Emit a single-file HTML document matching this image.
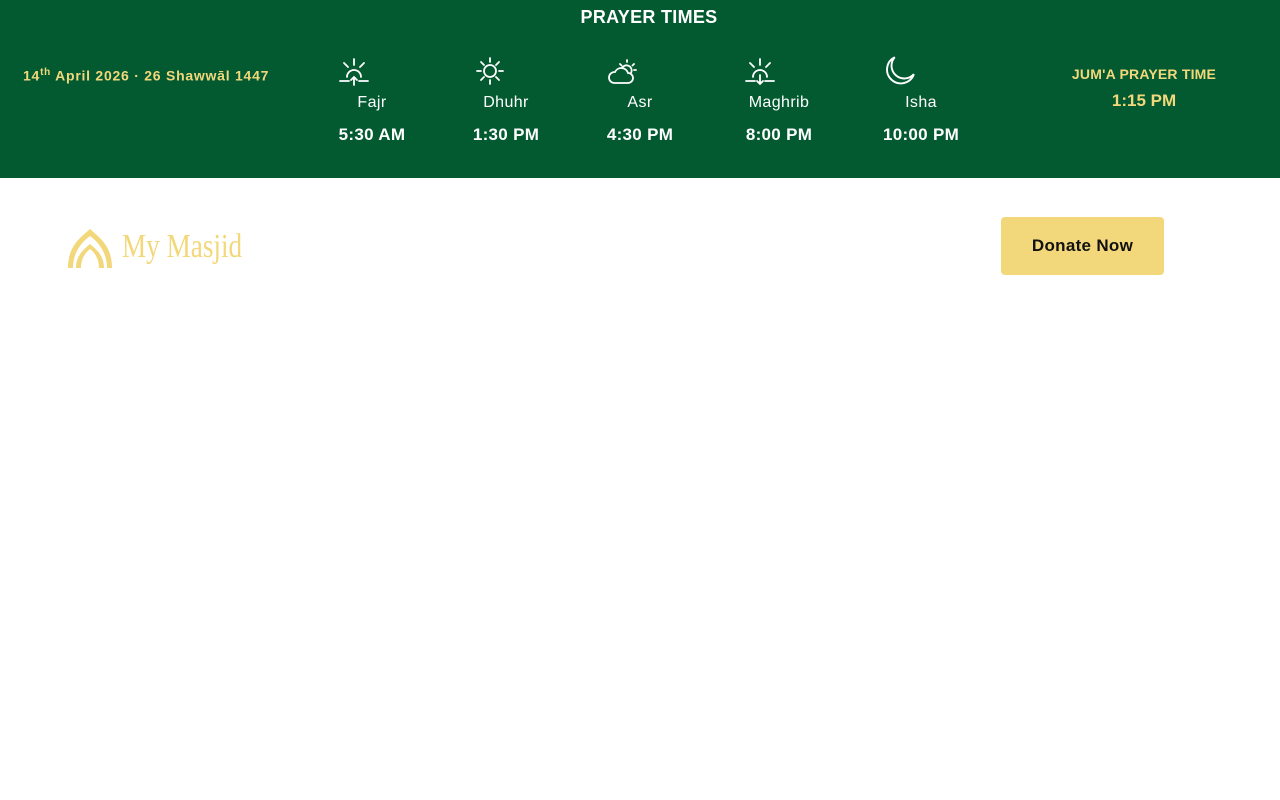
<!DOCTYPE html>
<html><head><meta charset="utf-8"><style>
body{margin:0;width:1280px;height:800px;background:#fff;font-family:"Liberation Sans",sans-serif;position:relative;overflow:hidden}
.bar{position:absolute;left:0;top:0;width:1280px;height:178px;background:#035a30;color:#fff}
.a{position:absolute;white-space:nowrap}
.c{transform:translateX(-50%)}
.lbl{font-size:16px;top:94px;letter-spacing:0.4px}
.t{font-size:17px;font-weight:bold;top:125px;letter-spacing:0.3px}
svg.i{position:absolute;top:57px;width:32px;height:30px;fill:none;stroke:#fff;stroke-width:1.8;stroke-linecap:round}
.y{color:#f2d87b}
</style></head><body>
<div class="bar">
<div class="a c" style="left:649px;top:7px;font-size:18px;font-weight:bold;letter-spacing:0.3px">PRAYER TIMES</div>
<div class="a y" style="left:23px;top:67px;font-size:14px;font-weight:bold;letter-spacing:0.75px">14<sup style="font-size:10px">th</sup> April 2026 · 26 Shawwāl 1447</div>

<svg class="i" style="left:338px" viewBox="0 0 32 30"><path d="M16 2v6M6 6l4 4M26 6l-4 4M9 20a7 7 0 0 1 14 0M2 24h9M21 24h9M16 28v-8M13 23l3-3 3 3"/></svg>
<svg class="i" style="left:474px" viewBox="0 0 32 30"><circle cx="16" cy="14" r="6"/><path d="M16 1v4M16 23v4M3 14h4M25 14h4M7 5l3 3M25 5l-3 3M7 23l3-3M25 23l-3-3"/></svg>
<svg class="i" style="left:606px" viewBox="0 0 32 30"><path d="M8 26h14a5 5 0 0 0 0-10 7 7 0 0 0-13-1 5.5 5.5 0 0 0-1 11zM16 11a5 5 0 0 1 9 5M21 3v2M28 7l-1.5 1.5M14 7l1.5 1.5M30 13h-2"/></svg>
<svg class="i" style="left:744px" viewBox="0 0 32 30"><path d="M16 2v6M6 6l4 4M26 6l-4 4M9 20a7 7 0 0 1 14 0M2 24h9M21 24h9M16 18v9M13 24l3 3 3-3"/></svg>
<svg class="i" style="left:882px;width:34px;height:32px;top:55px" viewBox="0 0 32 30"><path d="M12 2a13 13 0 1 0 18 16 10 10 0 0 1-18-16z"/></svg>

<div class="a c lbl" style="left:372px">Fajr</div>
<div class="a c lbl" style="left:506px">Dhuhr</div>
<div class="a c lbl" style="left:640px">Asr</div>
<div class="a c lbl" style="left:779px">Maghrib</div>
<div class="a c lbl" style="left:921px">Isha</div>
<div class="a c t" style="left:372px">5:30 AM</div>
<div class="a c t" style="left:506px">1:30 PM</div>
<div class="a c t" style="left:640px">4:30 PM</div>
<div class="a c t" style="left:779px">8:00 PM</div>
<div class="a c t" style="left:921px">10:00 PM</div>
<div class="a c y" style="left:1144px;top:66px;font-size:14px;font-weight:bold;letter-spacing:0.2px">JUM'A PRAYER TIME</div>
<div class="a c y" style="left:1144px;top:91px;font-size:17px;font-weight:bold">1:15 PM</div>
</div>

<svg style="position:absolute;left:66px;top:228px" width="50" height="42" viewBox="0 0 50 42"><path fill="#f2d87b" d="M24 1C14 10 2 18 2 40h5C7 24 16 14 24 8c8 6 17 16 17 32h5C46 18 34 10 24 1z"/><path fill="#f2d87b" d="M24 16C17 22 10 28 10 40h5c0-9 4-15 9-19 5 4 9 10 9 19h5c0-12-7-18-14-24z"/></svg>
<div class="a" style="left:122px;top:228px;font-family:'Liberation Serif',serif;font-size:34px;color:#f2d87b;transform:scaleX(0.8);transform-origin:0 0">My Masjid</div>

<div class="a" style="left:1001px;top:217px;width:163px;height:58px;background:#f2d87b;border-radius:4px;font-size:17px;font-weight:bold;color:#111;text-align:center;line-height:57px;letter-spacing:0.3px">Donate Now</div>
</body></html>
